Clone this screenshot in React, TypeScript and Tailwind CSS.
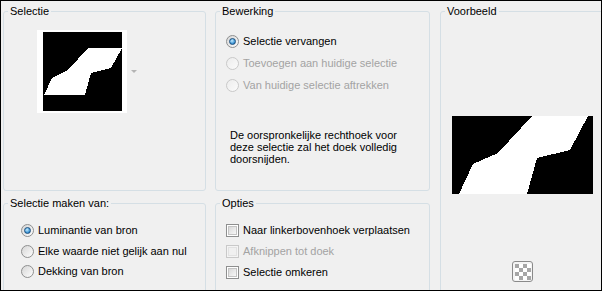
import clsx from 'clsx'

function Radio({ label, checked, disabled, rowClass }: { label: string; checked?: boolean; disabled?: boolean; rowClass: string }) {
  return (
    <div className={clsx('flex items-center gap-[4px]', rowClass)}>
      <span
        className={clsx(
          'flex h-[13px] w-[13px] shrink-0 items-center justify-center rounded-full border',
          disabled
            ? 'border-[#c9c9c9] bg-[linear-gradient(135deg,#ececec,#fbfbfb)]'
            : 'border-[#8e8f8f] bg-[linear-gradient(135deg,#d6d6d6,#fdfdfd)]'
        )}
      >
        {checked && (
          <span className="h-[7px] w-[7px] rounded-full border border-[#1b4f7e] bg-[radial-gradient(circle_at_40%_35%,#c4ecff,#3a93d4_65%,#1d5f94)]" />
        )}
      </span>
      <span className={disabled ? 'text-[#a3a3a3]' : 'text-black'}>{label}</span>
    </div>
  )
}

function Check({ label, disabled }: { label: string; disabled?: boolean }) {
  return (
    <div className="flex h-[21px] items-center gap-[4px]">
      <span
        className={clsx(
          'flex h-[13px] w-[13px] shrink-0 items-center justify-center border',
          disabled ? 'border-[#c9c9c9] bg-[#f4f4f4]' : 'border-[#8e8f8f] bg-white'
        )}
      >
        <span
          className={clsx(
            'h-[9px] w-[9px] border',
            disabled ? 'border-[#e2e2e2] bg-[#f0f0f0]' : 'border-[#c4c4c4] bg-[linear-gradient(135deg,#d9d9d9,#f7f7f7)]'
          )}
        />
      </span>
      <span className={disabled ? 'text-[#a3a3a3]' : 'text-black'}>{label}</span>
    </div>
  )
}

function Group({ title, className, children }: { title: string; className: string; children: React.ReactNode }) {
  return (
    <fieldset className={clsx('rounded-[3px] border border-[#d5dfe5]', className)}>
      <legend className="ml-[4px] px-[2px] leading-[12px] text-black">{title}</legend>
      {children}
    </fieldset>
  )
}

export default function App() {
  return (
    <div className="flex h-[291px] w-[602px] overflow-hidden border border-black bg-[#f0f0f0] pl-[2px] pt-[4px] font-['Liberation_Sans',Arial,sans-serif] text-[11px] leading-[13px]">
      <div className="flex w-[203px] shrink-0 flex-col gap-[6px]">
        <Group title="Selectie" className="h-[186px] shrink-0">
          <div className="ml-[33px] mt-[13px] flex items-center gap-[4px]">
            <div className="bg-white pb-[2px] pl-[6px] pr-[5px] pt-[2px]">
              <svg width="79" height="79" viewBox="0 0 79 79" shapeRendering="crispEdges" className="block">
                <rect width="79" height="79" fill="#000" />
                <polygon points="45,16 79,16 68,36 48,41 42,63 1,63 9,46 25,38" fill="#fff" />
              </svg>
            </div>
            <svg width="6" height="4" viewBox="0 0 6 4" className="block">
              <polygon points="0,0 6,0 3,3" fill="#b4b4b4" />
            </svg>
          </div>
        </Group>
        <Group title="Selectie maken van:" className="h-[120px] shrink-0">
          <div className="ml-[17px] mt-[11px] flex flex-col">
            <Radio label="Luminantie van bron" checked rowClass="h-[21px]" />
            <Radio label="Elke waarde niet gelijk aan nul" rowClass="h-[20px]" />
            <Radio label="Dekking van bron" rowClass="h-[21px]" />
          </div>
        </Group>
      </div>

      <div className="ml-[9px] flex w-[215px] shrink-0 flex-col gap-[6px]">
        <Group title="Bewerking" className="h-[186px] shrink-0">
          <div className="ml-[10px] mt-[13px] flex flex-col">
            <Radio label="Selectie vervangen" checked rowClass="h-[22px]" />
            <Radio label="Toevoegen aan huidige selectie" disabled rowClass="h-[22px]" />
            <Radio label="Van huidige selectie aftrekken" disabled rowClass="h-[22px]" />
          </div>
          <p className="ml-[14px] mt-[33px] leading-[12px] text-black">
            De oorspronkelijke rechthoek voor
            <br />
            deze selectie zal het doek volledig
            <br />
            doorsnijden.
          </p>
        </Group>
        <Group title="Opties" className="h-[120px] shrink-0">
          <div className="ml-[10px] mt-[11px] flex flex-col">
            <Check label="Naar linkerbovenhoek verplaatsen" />
            <Check label="Afknippen tot doek" disabled />
            <Check label="Selectie omkeren" />
          </div>
        </Group>
      </div>

      <Group title="Voorbeeld" className="ml-[10px] h-[320px] w-[165px] shrink-0">
        <div className="flex flex-col items-center">
          <svg width="141" height="78" viewBox="0 0 141 78" shapeRendering="crispEdges" className="mt-[99px] block">
            <rect width="141" height="78" fill="#000" />
            <polygon points="80,0 136,0 118,34 85,42 75,78 7,78 21,48 46,37" fill="#fff" />
          </svg>
          <div className="mt-[67px] flex h-[21px] w-[21px] items-center justify-center rounded-[3px] border border-[#8a8a8a] bg-[#f4f4f4]">
            <svg width="16" height="16" viewBox="0 0 16 16" shapeRendering="crispEdges" className="block">
              <rect width="16" height="16" fill="#fff" />
              <rect x="0" y="0" width="4" height="4" fill="#a6a6a6" />
              <rect x="8" y="0" width="4" height="4" fill="#a6a6a6" />
              <rect x="4" y="4" width="4" height="4" fill="#a6a6a6" />
              <rect x="12" y="4" width="4" height="4" fill="#a6a6a6" />
              <rect x="0" y="8" width="4" height="4" fill="#a6a6a6" />
              <rect x="8" y="8" width="4" height="4" fill="#a6a6a6" />
              <rect x="4" y="12" width="4" height="4" fill="#a6a6a6" />
              <rect x="12" y="12" width="4" height="4" fill="#a6a6a6" />
            </svg>
          </div>
        </div>
      </Group>
    </div>
  )
}
